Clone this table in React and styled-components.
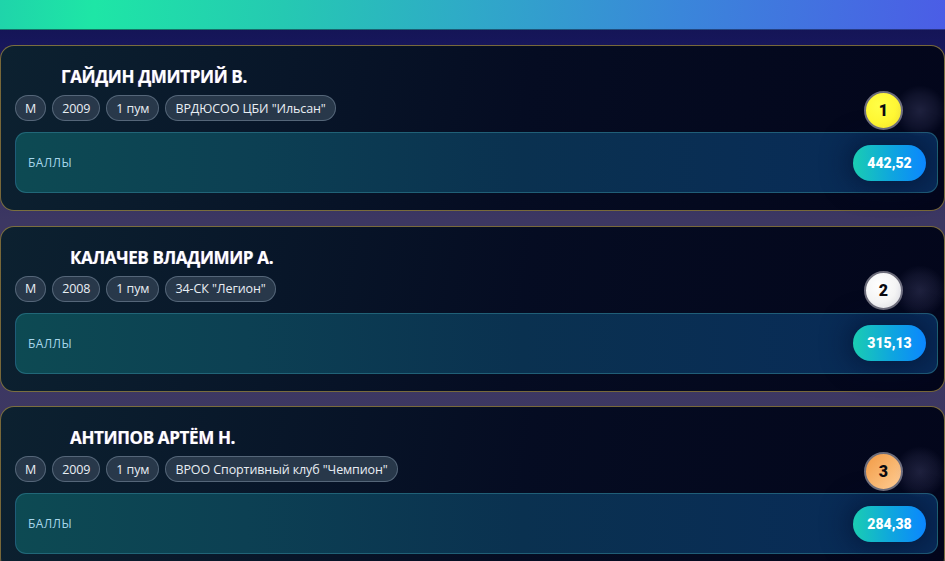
import React from "react";
import styled, { createGlobalStyle } from "styled-components";

const Global = createGlobalStyle`
  html, body { margin: 0; padding: 0; }
  body {
    width: 945px;
    min-height: 561px;
    overflow: hidden;
    font-family: "Open Sans", "Noto Sans", sans-serif;
    background: linear-gradient(180deg, #10114c 0px, #16165a 40px, #2e2a5e 140px, #3c3762 220px, #3d3862 100%);
  }
`;

const Page = styled.div`
  display: flex;
  flex-direction: column;
`;

const TopBar = styled.div`
  height: 29px;
  background: linear-gradient(95deg, #1fd4aa 0%, #1ee6a6 10%, #25c9b2 30%, #2fa9c8 50%, #3a86da 72%, #4b5de6 100%);
  border-bottom: 1px solid rgba(10, 10, 40, 0.5);
`;

const List = styled.div`
  display: flex;
  flex-direction: column;
  gap: 14.5px;
  padding-top: 15px;
`;

const Card = styled.div`
  position: relative;
  height: 166px;
  box-sizing: border-box;
  width: 945px;
  display: flex;
  flex-direction: column;
  padding: 20px 6px 17px 14px;
  border: 1px solid rgba(170, 145, 70, 0.7);
  border-radius: 14px;
  background: linear-gradient(100deg, #0c2130 0%, #081629 30%, #050c22 55%, #03061b 100%);
`;

const Name = styled.div`
  padding-left: ${(p) => p.$indent}px;
  font-size: 17px;
  line-height: 22px;
  font-weight: 700;
  color: #ffffff;
  letter-spacing: -0.35px;
  text-shadow: -0.6px 0 rgba(255, 60, 120, 0.45), 0.6px 0 rgba(60, 200, 255, 0.45);
`;

const ChipRow = styled.div`
  margin-top: 7px;
  height: 26px;
  display: flex;
  align-items: center;
  gap: 6px;
`;

const Chip = styled.span`
  height: 26px;
  box-sizing: border-box;
  display: inline-flex;
  align-items: center;
  padding: 0 9px;
  border-radius: 13px;
  background: #28384a;
  border: 1px solid rgba(140, 160, 180, 0.45);
  color: #e8eef4;
  font-size: 12.5px;
  letter-spacing: -0.1px;
  white-space: nowrap;
`;

const badgeBg = {
  1: "radial-gradient(circle at 40% 35%, #ffff48 0%, #fff733 55%, #f2e02a 100%)",
  2: "radial-gradient(circle at 40% 35%, #ffffff 0%, #f4f4f4 55%, #d9d9de 100%)",
  3: "linear-gradient(135deg, #f39a44 0%, #f8b46c 50%, #ffcc94 100%)",
};

const Badge = styled.div`
  position: relative;
  margin-left: auto;
  margin-right: 35px;
  margin-top: 4px;
  flex: 0 0 auto;
  width: 39px;
  height: 39px;
  box-sizing: border-box;
  border-radius: 50%;
  border: 2px solid #6c6c7a;
  background: ${(p) => badgeBg[p.$rank]};
  display: flex;
  align-items: center;
  justify-content: center;
  font-family: Roboto, "Liberation Sans", sans-serif;
  font-weight: 900;
  font-size: 16px;
  color: #0a0a10;

  &::after {
    content: "";
    position: absolute;
    left: 28px;
    top: -8px;
    width: 52px;
    height: 52px;
    border-radius: 50%;
    background: radial-gradient(circle, rgba(140, 140, 200, 0.2) 0%, rgba(140, 140, 200, 0.09) 45%, rgba(140, 140, 200, 0) 70%);
    pointer-events: none;
  }
`;

const Panel = styled.div`
  margin-top: 11px;
  height: 61px;
  box-sizing: border-box;
  display: flex;
  align-items: center;
  justify-content: space-between;
  padding: 0 11px 0 12px;
  border-radius: 11px;
  border: 1px solid rgba(45, 120, 140, 0.65);
  background: linear-gradient(90deg, #0d4a53 0%, #0c4053 25%, #0a3150 55%, #082a58 100%);
`;

const Label = styled.span`
  font-size: 12px;
  letter-spacing: 0.4px;
  color: #a6d6ea;
`;

const Score = styled.span`
  height: 36px;
  min-width: 73px;
  box-sizing: border-box;
  padding: 0 14px;
  border-radius: 18px;
  display: inline-flex;
  align-items: center;
  justify-content: center;
  background: linear-gradient(90deg, #1acdb2 0%, #0fa8dc 50%, #0b86ff 100%);
  box-shadow: 0 0 26px 6px rgba(2, 14, 45, 0.55);
  color: #ffffff;
  font-family: Roboto, "Liberation Sans", sans-serif;
  font-weight: 900;
  font-size: 14px;
`;

const athletes = [
  { rank: 1, name: "ГАЙДИН ДМИТРИЙ В.", indent: 46, year: "2009", club: 'ВРДЮСОО ЦБИ "Ильсан"', score: "442,52" },
  { rank: 2, name: "КАЛАЧЕВ ВЛАДИМИР А.", indent: 55, year: "2008", club: '34-СК "Легион"', score: "315,13" },
  { rank: 3, name: "АНТИПОВ АРТЁМ Н.", indent: 55, year: "2009", club: 'ВРОО Спортивный клуб "Чемпион"', score: "284,38" },
];

export default function App() {
  return (
    <Page>
      <Global />
      <TopBar />
      <List>
        {athletes.map((a) => (
          <Card key={a.rank}>
            <Name $indent={a.indent}>{a.name}</Name>
            <ChipRow>
              <Chip>М</Chip>
              <Chip>{a.year}</Chip>
              <Chip>1 пум</Chip>
              <Chip>{a.club}</Chip>
              <Badge $rank={a.rank}>{a.rank}</Badge>
            </ChipRow>
            <Panel>
              <Label>БАЛЛЫ</Label>
              <Score>{a.score}</Score>
            </Panel>
          </Card>
        ))}
      </List>
    </Page>
  );
}
